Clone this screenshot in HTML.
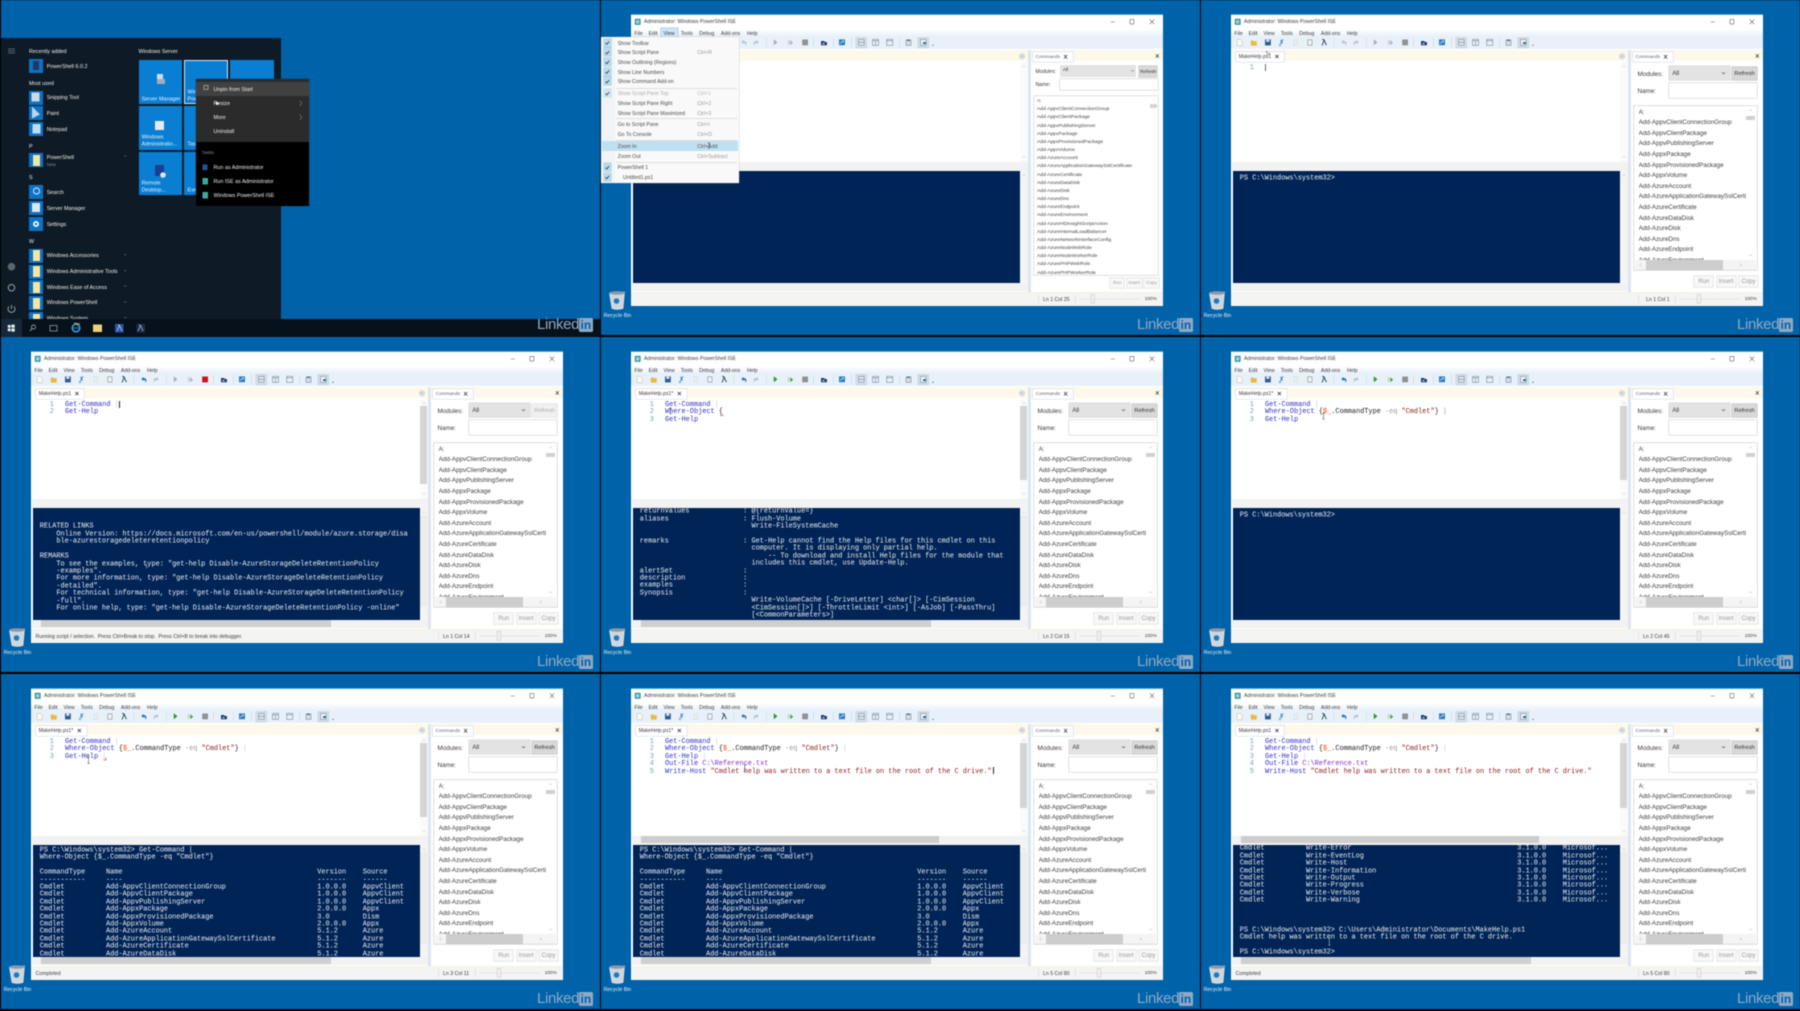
<!DOCTYPE html>
<html><head><meta charset="utf-8"><title>PowerShell ISE</title>
<style>
html,body{margin:0;padding:0;width:1800px;height:1011px;overflow:hidden;background:#000}
#r{position:absolute;left:0;top:0;width:1800px;height:1011px;filter:blur(.4px)}
.c{position:absolute;width:600px;height:337px;overflow:hidden;background:#000}
.c>*{position:absolute}
.o{left:0;top:0;width:600px;height:337px}
.d{left:1px;top:0;width:599px;height:335px;background:#0062a9}
.t{position:absolute;white-space:pre;font:5.2px/6px "Liberation Sans",sans-serif;color:#3c3c3c}
.rb{left:3.8px;top:313px;color:#e8f0f6;font-size:5.2px}
.li{left:537px;top:316px;font:15px/18px "Liberation Sans",sans-serif;letter-spacing:-.35px;color:#8fa9c6}
.in{left:578.6px;top:317.5px;width:14.5px;height:14px;background:#8fa9c6;border-radius:1.5px;color:#0062a9;font:bold 12px/15px "Liberation Sans",sans-serif;text-align:center}
.w{left:31.4px;top:15.3px;width:531.2px;height:290.4px;background:#fff;box-shadow:0 -.8px 0 #62b9de}
.mb{left:31.4px;top:29px;width:531.2px;height:7.7px;background:linear-gradient(#fff,#e6f0fa)}
.tb{left:31.4px;top:36.7px;width:531.2px;height:12.8px;background:#e8f1f9}
.ts{left:32px;top:49.5px;width:396px;height:11.8px;background:#fdf8ea}
.ts2{left:431px;top:49.5px;width:131.6px;height:11.8px;background:#fdf8ea}
.tab{left:35.6px;top:51.5px;width:48.5px;height:10.2px;background:#fff;box-shadow:0 0 0 .5px #c6d9e8}
.tab2{width:51px}
.ctab{left:433px;top:51.5px;width:40px;height:10.2px;background:#fff;box-shadow:0 0 0 .5px #c6d9e8}
.dv{left:428px;top:49.5px;width:3px;height:243px;background:#dbe6f0}
.hs{left:32px;top:162px;width:396px;height:8.5px;background:#f2f2f2}
.vs{left:420px;top:62px;width:8px;height:100px;background:#fafafa}
.vth{left:420px;top:69px;width:7px;background:#d4d4d4}
.hth{left:40.5px;top:162px;width:298px;height:6.8px;background:#cdcdcd}
.con{left:33px;top:171.3px;width:386.5px;height:111.4px;background:#012456;overflow:hidden}
.con pre{position:absolute;margin:0;font:6.9px/7.4px "Liberation Mono",monospace;color:#eef2f7;left:6.8px;white-space:pre;transform:translateY(1.6px)}
.vc{left:420px;top:171px;width:8px;height:112px;background:#f4f4f4}
.vct{left:420px;top:178px;width:7px;height:92px;background:#ececec}
.hc{left:32px;top:283px;width:396px;height:7.5px;background:#f2f2f2}
.hct{left:40.5px;top:283.3px;width:290px;height:6.7px;background:#cfcfcf}
.st{left:31.4px;top:291.5px;width:531.2px;height:14.2px;background:#f4f4f4;border-top:1px solid #f7f0dc;box-sizing:border-box}
.code{margin:0;left:65px;top:65px;font:6.9px/7.4px "Liberation Mono",monospace;color:#222;white-space:pre}
.num{margin:0;left:49.8px;top:65px;font:6.9px/7.4px "Liberation Mono",monospace;color:#66a5b5;white-space:pre}
.k{color:#2f2fc4}.s{color:#8b1a1a}.v{color:#ff4500}.g{color:#999}.m{color:#7a30d0}.p{color:#ccc}
.dd{left:469.2px;top:66px;width:60.5px;height:14.3px;background:#e3e3e3;box-shadow:0 0 0 .5px #d4d4d4}
.rf{left:532.3px;top:66.7px;width:24.5px;height:13.3px;background:#d8d8d8;box-shadow:0 0 0 .6px #c4c4c4;font:5.8px/15.3px "Liberation Sans",sans-serif;color:#333;text-align:center}
.rfd{background:#f0f0f0;color:#aaa;box-shadow:0 0 0 .6px #ddd}
.nm{left:469.2px;top:83.3px;width:87.6px;height:14.4px;background:#fff;box-shadow:0 0 0 .6px #cfcfcf}
.lb{left:434.4px;top:105.7px;width:122.4px;height:164.3px;background:#fff;box-shadow:0 0 0 .6px #c9c9c9}
.ll{margin:0;left:438.6px;top:106.9px;width:107.5px;height:153.1px;overflow:hidden;padding-top:.7px;box-sizing:border-box;font:6.3px/10.6px "Liberation Sans",sans-serif;color:#3f3f3f;white-space:pre}
.lh{left:434.8px;top:260px;width:121.6px;height:9.6px;background:#f4f4f4}
.lht{left:445.8px;top:260px;width:77.7px;height:9.6px;background:#cdcdcd}
.lvt{left:546.4px;top:115.7px;width:8.6px;height:4.6px;background:#d0d0d0}
.b{top:275.7px;height:11.6px;width:19px;background:#f8f8f8;box-shadow:0 0 0 .6px #dadada;font:6px/12.6px "Liberation Sans",sans-serif;color:#9a9a9a;text-align:center}
.x{font:bold 7.5px/6px "Liberation Sans",sans-serif;color:#444}
.sm{position:absolute;left:1px;top:38.3px;width:279.5px;height:281px;background:#0e1b26}
.tk{left:1px;top:319.3px;width:599px;height:18px;background:#07111b}
.sb{left:1px;top:319.3px;width:21px;height:18px;background:#15293a}
.tile{position:absolute;width:43.6px;height:43.7px;background:#0a7ed2}
.w1{color:#dfe6ec;font-size:5.4px}
.ic{position:absolute;left:29px;width:14px;height:14px;background:#0b72c4}
.fd{position:absolute;left:32.5px;width:7.5px;height:11px;background:#f4e6a0}
.cu{left:196.3px;top:79px;width:112.5px;height:127px;background:#000;box-shadow:0 0 1px #222}
.cu1{left:196.3px;top:79px;width:112.5px;height:63px;background:#2b2b2b}
.cu2{left:196.3px;top:82.3px;width:112.5px;height:14px;background:#414141}
.wt{color:#eee;font-size:5.4px;transform:translateY(.9px)}
.ti{color:#e6f2fb;font-size:5.4px;transform:translateY(.5px)}
.mn{left:1px;top:36.7px;width:137.6px;height:146px;background:#f9f9f9;box-shadow:0 0 1px #999}
.mi{color:#4a4a4a;font-size:5.2px;transform:translateY(.8px)}
.ms{color:#9a9a9a;font-size:5.2px;transform:translateY(.8px)}
.sp{position:absolute;left:16px;width:121px;height:.6px;background:#ddd}
.ckb{position:absolute;left:3.8px;width:6.9px;height:8px;background:#bcdcec;box-shadow:0 0 0 .4px #8fbcd4}
.lst{margin:0;left:437px;top:98px;width:112px;height:176.7px;overflow:hidden;font:4.9px/8.17px "Liberation Sans",sans-serif;color:#444;white-space:pre}
</style></head><body>
<svg width="0" height="0" style="position:absolute"><defs>
<g id="bin"><path d="M9.5 293.5l15-1.500 -1.500 16.500q-6 2-11 0z" fill="#cfd6dc" stroke="#eef2f5" stroke-width=".6"/><ellipse cx="17" cy="293" rx="7.800" ry="1.800" fill="#8d99a4"/><circle cx="16.500" cy="301" r="2.800" fill="#1c7ac4"/></g>
<g id="tb">
<path d="M37.200 39.200h3.200l1.800 1.800v4.800h-5z" fill="#fbfbf4" stroke="#b8b8a8" stroke-width=".5"/>
<path d="M50.800 40.500h2.400l.8.800h2.800v4.300h-6z" fill="#e9b847"/>
<rect x="65" y="39.400" width="5.800" height="6" fill="#2c5c94"/><rect x="66.200" y="39.600" width="3.200" height="2.200" fill="#dfe9f2"/>
<path d="M83 39.400l-2.500 4.200M80.600 39.800l1.800 3.800" stroke="#2f78c0" stroke-width=".9" fill="none"/><circle cx="80" cy="45" r=".9" fill="none" stroke="#2f78c0" stroke-width=".5"/>
<rect x="94" y="40" width="3.500" height="5" fill="#eceff2" stroke="#c8ccd0" stroke-width=".4"/>
<rect x="107.800" y="39.800" width="4.200" height="5.400" fill="#f4f4f4" stroke="#808a94" stroke-width=".6"/>
<path d="M122 45.500l2.200-5.500-2-.8M124.200 40.200l2.200 5" stroke="#27385c" stroke-width=".9" fill="none"/>
<path d="M134 38v9M166.500 38v9M213.500 38v9M233.500 38v9M251.400 38v9M299.700 38v9" stroke="#c6d3df" stroke-width=".5"/>
<path d="M141.500 42l1.800-2v1.200q3-.2 3 2.500q0 1-1 1.800q.6-2.800-2-2.600v1.200z" fill="#b4bdc6"/>
<path d="M158.500 42l-1.800-2v1.200q-3-.2-3 2.500q0 1 1 1.800q-.6-2.800 2-2.600v1.200z" fill="#b4bdc6"/>
<path d="M173.800 39.400l3.600 2.900-3.600 2.900z" fill="#a9adb2"/>
<rect x="187.800" y="40.200" width="3.500" height="4.600" fill="#d0d4d8"/><path d="M190.500 40.800l2.600 2-2.600 2z" fill="#a9adb2"/>
<rect x="202.200" y="39.500" width="5.800" height="5.800" fill="#8e9296"/>
<path d="M221 41h3l1 1h2v3.200h-6z" fill="#1c3c8c"/><rect x="222.500" y="43" width="2" height="1.300" fill="#f0d050"/>
<rect x="239" y="39.400" width="6" height="5.800" fill="#2a7cc8"/><path d="M240.200 43.600l3-3M243.400 40.400v2" stroke="#fff" stroke-width=".6" fill="none"/>
<rect x="256" y="37.600" width="10.500" height="10" fill="#dbe6f0" stroke="#9fb0c0" stroke-width=".4"/>
<rect x="258.500" y="39.400" width="5.800" height="6" fill="none" stroke="#68747e" stroke-width=".5"/><path d="M258.500 42.400h5.800" stroke="#68747e" stroke-width=".5"/>
<rect x="272.500" y="39.400" width="6" height="6" fill="none" stroke="#68747e" stroke-width=".5"/><path d="M272.500 40.800h6M275.500 40.800v4.600" stroke="#68747e" stroke-width=".5"/>
<rect x="286.700" y="39.400" width="6" height="6" fill="none" stroke="#68747e" stroke-width=".5"/><path d="M286.700 40.800h6" stroke="#68747e" stroke-width=".5"/>
<rect x="306" y="40" width="5" height="5.400" fill="#d6dce2" stroke="#6c7884" stroke-width=".5"/><path d="M307 39.500h3v1.500h-3z" fill="#48708c"/>
<rect x="318" y="37.600" width="10.500" height="10" fill="#d4dfe9" stroke="#a8b8c6" stroke-width=".4"/>
<rect x="320.500" y="39.400" width="5.500" height="6" fill="#f0f4f8" stroke="#68747e" stroke-width=".5"/><path d="M323 42.200h3v1.800h-3z" fill="#1c5c94"/>
<circle cx="333" cy="45.300" r=".6" fill="#445"/>
<path d="M510.800 22h4" stroke="#888" stroke-width=".7"/><rect x="530" y="19.400" width="3.800" height="4.600" fill="none" stroke="#666" stroke-width=".6"/>
<path d="M549.800 19.500l4.400 4.600M554.200 19.500l-4.400 4.600" stroke="#666" stroke-width=".6"/>
<rect x="34.800" y="18.800" width="5.800" height="6" fill="#2b8f9a"/><rect x="36" y="20" width="3.400" height="3.600" fill="#a2d2d2"/>
<circle cx="422" cy="56.300" r="2.600" fill="#e4e8ec" stroke="#9aa6b2" stroke-width=".4"/><path d="M420.800 56.800l1.200-1.200 1.200 1.200" stroke="#667" stroke-width=".5" fill="none"/>
<path d="M555.800 54.200l3 3.400M558.800 54.200l-3 3.400M464 54.800l3.200 3.800M467.200 54.800l-3.200 3.800" stroke="#333" stroke-width=".7"/>
<path d="M479.500 299h60" stroke="#e0e0e0" stroke-width=".7"/><path d="M438.600 295v8M475.300 295v8" stroke="#c8c8c8" stroke-width=".4"/>
<path d="M422.500 67l1.500-1.500 1.500 1.500M422.500 156l1.500 1.500 1.500-1.500M422.500 176l1.500-1.500 1.500 1.500" stroke="#bbb" stroke-width=".5" fill="none"/>
</g>
<g id="pn"><path d="M521.800 72.300l1.700 1.500 1.700-1.500" stroke="#444" stroke-width=".6" fill="none"/>
<path d="M549 111l1.500-1.500 1.500 1.500M549 254.500l1.500 1.500 1.500-1.500M441.300 263.500l-1.500 1.500 1.500 1.500M540 263.500l1.500 1.500-1.500 1.500" stroke="#aaa" stroke-width=".5" fill="none"/>
<rect x="497.300" y="294.300" width="3.400" height="9" fill="#f0f0f0" stroke="#bbb" stroke-width=".4"/></g>
<path id="undo" d="M141.500 42l1.800-2v1.200q3-.2 3 2.500q0 1-1 1.800q.6-2.800-2-2.600v1.200z" fill="#1d6bb8"/>
<g id="run"><path d="M173.800 39.400l3.600 2.900-3.600 2.900z" fill="#22a030"/><rect x="187.800" y="40.200" width="3.500" height="4.600" fill="#cfd8cf"/><path d="M190.500 40.800l2.600 2-2.600 2z" fill="#22a030"/></g>
</defs></svg>
<div id="r">

<!-- CELL 1 -->
<div class="c" style="left:0;top:0">
<div class="d"></div>
<div class="sm"></div>
<div class="tk"></div><div class="sb"></div>
<div class="t wt" style="left:29px;top:48px">Recently added</div>
<div class="ic" style="top:59px"></div><div class="t wt" style="left:46.700px;top:62.700px">PowerShell 6.0.2</div>
<div class="t wt" style="left:29px;top:79.700px">Most used</div>
<div class="ic" style="top:90.500px"></div><div class="t wt" style="left:46.700px;top:94.300px">Snipping Tool</div>
<div class="ic" style="top:106px"></div><div class="t wt" style="left:46.700px;top:110px">Paint</div>
<div class="ic" style="top:122px"></div><div class="t wt" style="left:46.700px;top:126px">Notepad</div>
<div class="t wt" style="left:29px;top:142.700px">P</div>
<div class="ic" style="top:153px"></div><div class="fd" style="top:154.500px"></div><div class="t wt" style="left:46.700px;top:153.700px">PowerShell</div><div class="t" style="left:46.700px;top:162px;color:#7e8c98;font-size:4.600px">New</div>
<div class="t wt" style="left:29px;top:174.300px">S</div>
<div class="ic" style="top:185px"></div><div class="t wt" style="left:46.700px;top:189px">Search</div>
<div class="ic" style="top:201px"></div><div class="t wt" style="left:46.700px;top:205px">Server Manager</div>
<div class="ic" style="top:217px"></div><div class="t wt" style="left:46.700px;top:220.700px">Settings</div>
<div class="t wt" style="left:29px;top:237.700px">W</div>
<div class="ic" style="top:248.500px"></div><div class="fd" style="top:250px"></div><div class="t wt" style="left:46.700px;top:252.300px">Windows Accessories</div>
<div class="ic" style="top:264.500px"></div><div class="fd" style="top:266px"></div><div class="t wt" style="left:46.700px;top:268px">Windows Administrative Tools</div>
<div class="ic" style="top:280px"></div><div class="fd" style="top:281.500px"></div><div class="t wt" style="left:46.700px;top:283.700px">Windows Ease of Access</div>
<div class="ic" style="top:296px"></div><div class="fd" style="top:297.500px"></div><div class="t wt" style="left:46.700px;top:299.300px">Windows PowerShell</div>
<div class="ic" style="top:312px;height:7.300px"></div><div class="fd" style="top:313.500px;height:5.800px"></div><div style="left:46.700px;top:314px;width:60px;height:5.300px;overflow:hidden"><div class="t wt" style="left:0;top:1px">Windows System</div></div>
<div class="t wt" style="left:138.500px;top:48px">Windows Server</div>
<div class="tile" style="left:138.500px;top:60.300px"></div>
<div class="tile" style="left:184px;top:60.300px;box-sizing:border-box;border:.8px solid #cfe8fa"></div>
<div class="tile" style="left:230px;top:60.300px"></div>
<div class="tile" style="left:138.500px;top:106px"></div>
<div class="tile" style="left:184px;top:106px"></div>
<div class="tile" style="left:230px;top:106px"></div>
<div class="tile" style="left:138.500px;top:151.700px"></div>
<div class="tile" style="left:184px;top:151.700px"></div>
<div class="tile" style="left:230px;top:151.700px"></div>
<div class="t ti" style="left:141.600px;top:95.700px">Server Manager</div>
<div class="t ti" style="left:141.600px;top:134.300px">Windows</div><div class="t ti" style="left:141.600px;top:141px">Administratio...</div>
<div class="t ti" style="left:141.600px;top:179.700px">Remote</div><div class="t ti" style="left:141.600px;top:187px">Desktop...</div>
<div class="t ti" style="left:187.500px;top:88.700px">Win</div><div class="t ti" style="left:187.500px;top:95.700px">Pow</div>
<div class="t ti" style="left:187.500px;top:141px">Task</div><div class="t ti" style="left:187.500px;top:187px">Eve</div>
<div class="cu"></div><div class="cu1"></div><div class="cu2"></div>
<div class="t wt" style="left:213.500px;top:86.300px">Unpin from Start</div>
<div class="t wt" style="left:213.500px;top:100.300px">Resize</div>
<div class="t wt" style="left:213.500px;top:114.300px">More</div>
<div class="t wt" style="left:213.500px;top:128.300px">Uninstall</div>
<div class="t" style="left:201.700px;top:151.200px;color:#8a8a8a;font-size:4.800px">Tasks</div>
<div class="t wt" style="left:213.500px;top:164.300px">Run as Administrator</div>
<div class="t wt" style="left:213.500px;top:178.300px">Run ISE as Administrator</div>
<div class="t wt" style="left:213.500px;top:192.300px">Windows PowerShell ISE</div>
<svg class="o" viewBox="0 0 600 337">
<path d="M8 49h7M8 51h7M8 53h7" stroke="#6c7680" stroke-width=".7"/>
<rect x="33" y="61" width="6" height="9" fill="#1f3768"/>
<rect x="31.500" y="92.500" width="8" height="9" fill="#cfd8e0"/><path d="M32 106.500l8 8-8 4z" fill="#b9d7e8"/><rect x="32.500" y="124" width="8" height="9.500" fill="#bcdcef"/>
<circle cx="36.500" cy="191" r="3" fill="none" stroke="#dcecf8" stroke-width=".9"/>
<rect x="32" y="203" width="8" height="9" fill="#dce8f0"/>
<circle cx="36" cy="224" r="3" fill="#eef4fa"/><circle cx="36" cy="224" r="1.200" fill="#0b72c4"/>
<path d="M124 155.500l1.200 1.200 1.200-1.200M124 254l1.200 1.200 1.200-1.200M124 270l1.200 1.200 1.200-1.200M124 285.500l1.200 1.200 1.200-1.200M124 301.500l1.200 1.200 1.200-1.200M124 317l1.200 1.200 1.200-1.200" stroke="#8c96a0" stroke-width=".5" fill="none"/>
<circle cx="11.500" cy="266.700" r="3.800" fill="#5c666e"/><circle cx="11.500" cy="287.700" r="3.200" fill="none" stroke="#9aa4ae" stroke-width="1"/>
<path d="M9 306.500a3.500 3.500 0 1 0 5 0M11.500 305v4" stroke="#c6ced6" stroke-width=".7" fill="none"/>
<rect x="157" y="74" width="6" height="9" fill="#d2dee8"/><rect x="157" y="79" width="8" height="5" fill="#9fb0be"/>
<rect x="155" y="121" width="9" height="9" fill="#e4eaf0"/><rect x="155" y="165" width="9" height="11" fill="#1b3f8f"/><circle cx="163" cy="175" r="2.800" fill="#dfe8f0"/>
<rect x="204" y="85.500" width="4" height="4" fill="none" stroke="#ccc" stroke-width=".6"/>
<rect x="202.500" y="164.500" width="5" height="5.600" fill="#2b4f9c"/><rect x="202.500" y="178" width="5.500" height="6.500" fill="#3ca8a0"/><rect x="202.500" y="192" width="5.500" height="6.500" fill="#3ca8a0"/>
<path d="M299.800 100.700l2 2.600-2 2.600M299.800 114.700l2 2.600-2 2.600" stroke="#aaa" stroke-width=".5" fill="none"/>
<path d="M215.500 101l1.500 4.500 1-1.500 1.500-.2z" fill="#fff"/>
<path d="M7.800 325h2.800v2.700H7.800zM11.400 324.600h3.300v3.100h-3.300zM7.800 328.500h2.800v2.700H7.800zM11.400 328.500h3.300v3.100h-3.300z" fill="#eaf2f8"/>
<circle cx="33.500" cy="327" r="2" fill="none" stroke="#bcc6ce" stroke-width=".7"/><path d="M32 328.500l-2 2.500" stroke="#bcc6ce" stroke-width=".7"/>
<rect x="50" y="325.500" width="7" height="5.500" fill="none" stroke="#bcc6ce" stroke-width=".6"/>
<circle cx="76" cy="328" r="3.800" fill="none" stroke="#3ba4e4" stroke-width="1.500"/><path d="M72.500 328h7" stroke="#3ba4e4" stroke-width=".8"/><path d="M74 323l6 1" stroke="#f0c840" stroke-width=".8"/>
<rect x="93" y="324.500" width="9" height="7.500" fill="#edd27a"/>
<rect x="115" y="324" width="8.500" height="8.500" fill="#2c54a8"/><path d="M117 331l2.500-5.500-1.500-1M119.500 325.500l2.500 5.500" stroke="#eef" stroke-width=".6" fill="none"/>
<rect x="136.500" y="324" width="8.500" height="8.500" fill="#1c2c4c"/><path d="M138 331l2.500-5.500-1.500-1M140.500 325.500l2.500 5.500" stroke="#dde" stroke-width=".6" fill="none"/>
</svg>
<div class="li">Linked</div><div class="in">in</div>
</div>

<!-- CELL 2 -->
<div class="c" style="left:600px;top:0">
<div class="d"></div>
<svg class="o" viewBox="0 0 600 337"><use href="#bin"/></svg>
<div class="t rb">Recycle Bin</div><div class="li">Linked</div><div class="in">in</div>
<div class="w"></div><div class="mb"></div><div class="tb"></div><div class="ts"></div><div class="ts2"></div><div class="dv"></div><div class="hs"></div><div class="vs"></div><div class="con"></div><div class="vc"></div><div class="hc"></div><div class="st"></div><div class="ctab"></div>
<div style="left:60.500px;top:28.300px;width:17.200px;height:8.400px;background:#cfe5f5;box-shadow:0 0 0 .5px #8cc0dc"></div>
<div class="t" style="left:44px;top:18.700px">Administrator: Windows PowerShell ISE</div>
<div class="t" style="left:34.400px;top:30.500px">File</div><div class="t" style="left:48.600px;top:30.500px">Edit</div><div class="t" style="left:63.500px;top:30.500px">View</div><div class="t" style="left:80.700px;top:30.500px">Tools</div><div class="t" style="left:99.100px;top:30.500px">Debug</div><div class="t" style="left:120.900px;top:30.500px">Add-ons</div><div class="t" style="left:147px;top:30.500px">Help</div>
<div class="t" style="left:435.500px;top:54.500px;font-size:4.800px;color:#5d6b70">Commands</div>
<div class="t" style="left:435.500px;top:68.600px;font-size:5.100px">Modules:</div><div class="t" style="left:435.500px;top:82.300px;font-size:5.100px">Name:</div>
<div style="left:460px;top:65.300px;width:75.800px;height:11.400px;background:#e3e3e3"></div><div class="t" style="left:462.700px;top:68px;font-size:4.900px">All</div>
<div style="left:539px;top:65.700px;width:18.300px;height:11px;background:#d8d8d8;box-shadow:0 0 0 .6px #c4c4c4;font:4.600px/12px 'Liberation Sans',sans-serif;color:#333;text-align:center">Refresh</div>
<div style="left:460px;top:79.300px;width:97.700px;height:10.700px;background:#fff;box-shadow:0 0 0 .6px #cfcfcf"></div>
<div style="left:433.600px;top:95.700px;width:124.100px;height:179.300px;background:#fff;box-shadow:0 0 0 .6px #cfcfcf"></div>
<pre class="lst">A:
Add-AppvClientConnectionGroup
Add-AppvClientPackage
Add-AppvPublishingServer
Add-AppxPackage
Add-AppxProvisionedPackage
Add-AppxVolume
Add-AzureAccount
Add-AzureApplicationGatewaySslCertificate
Add-AzureCertificate
Add-AzureDataDisk
Add-AzureDisk
Add-AzureDns
Add-AzureEndpoint
Add-AzureEnvironment
Add-AzureHDInsightScriptAction
Add-AzureInternalLoadBalancer
Add-AzureNetworkInterfaceConfig
Add-AzureNodeWebRole
Add-AzureNodeWorkerRole
Add-AzurePHPWebRole
Add-AzurePHPWorkerRole</pre>
<div style="left:549.500px;top:103.500px;width:7px;height:4px;background:#d4d4d4"></div>
<div class="b" style="left:510px;top:278.300px;width:14.400px;height:9.700px;font-size:4.600px;line-height:10.500px">Run</div><div class="b" style="left:527px;top:278.300px;width:14.500px;height:9.700px;font-size:4.600px;line-height:10.500px">Insert</div><div class="b" style="left:544.200px;top:278.300px;width:14.500px;height:9.700px;font-size:4.600px;line-height:10.500px">Copy</div>
<div class="t" style="left:443px;top:296.700px">Ln 1 Col 25</div><div class="t" style="left:544.600px;top:297px;font-size:4.800px">100%</div>
<svg class="o" viewBox="0 0 600 337"><use href="#tb"/><path d="M531 70l1.500 1.500 1.500-1.500" stroke="#555" stroke-width=".5" fill="none"/><rect x="491" y="294.300" width="3.400" height="9" fill="#f0f0f0" stroke="#bbb" stroke-width=".4"/></svg>
<div class="mn"></div>
<div style="left:1px;top:36.700px;width:14px;height:146px;background:#f0f4f7"></div>
<div class="ckb" style="top:38.700px"></div><div class="ckb" style="top:48.300px"></div><div class="ckb" style="top:58px"></div><div class="ckb" style="top:67.700px"></div><div class="ckb" style="top:77.300px"></div><div class="ckb" style="top:89.300px;opacity:.6"></div><div class="ckb" style="top:163.300px"></div><div class="ckb" style="top:173px"></div>
<div style="left:2px;top:140.700px;width:136px;height:10px;background:#bfe0f0"></div>
<div class="sp" style="top:87.500px"></div><div class="sp" style="top:118.300px"></div><div class="sp" style="top:139.500px"></div><div class="sp" style="top:161.500px"></div>
<div class="t mi" style="left:17.600px;top:39.700px">Show Toolbar</div>
<div class="t mi" style="left:17.600px;top:49.300px">Show Script Pane</div><div class="t ms" style="left:97.200px;top:49.300px">Ctrl+R</div>
<div class="t mi" style="left:17.600px;top:59px">Show Outlining (Regions)</div>
<div class="t mi" style="left:17.600px;top:68.700px">Show Line Numbers</div>
<div class="t mi" style="left:17.600px;top:78.300px">Show Command Add-on</div>
<div class="t mi" style="left:17.600px;top:90.300px;color:#aaa">Show Script Pane Top</div><div class="t ms" style="left:97.200px;top:90.300px;color:#bbb">Ctrl+1</div>
<div class="t mi" style="left:17.600px;top:100px">Show Script Pane Right</div><div class="t ms" style="left:97.200px;top:100px">Ctrl+2</div>
<div class="t mi" style="left:17.600px;top:109.700px">Show Script Pane Maximized</div><div class="t ms" style="left:97.200px;top:109.700px">Ctrl+3</div>
<div class="t mi" style="left:17.600px;top:121.300px">Go to Script Pane</div><div class="t ms" style="left:97.200px;top:121.300px">Ctrl+I</div>
<div class="t mi" style="left:17.600px;top:131.300px">Go To Console</div><div class="t ms" style="left:97.200px;top:131.300px">Ctrl+D</div>
<div class="t mi" style="left:17.600px;top:142.700px">Zoom In</div><div class="t ms" style="left:97.200px;top:142.700px;color:#555">Ctrl+Add</div>
<div class="t mi" style="left:17.600px;top:152.700px">Zoom Out</div><div class="t ms" style="left:97.200px;top:152.700px">Ctrl+Subtract</div>
<div class="t mi" style="left:17.600px;top:164.300px">PowerShell 1</div>
<div class="t mi" style="left:23px;top:174px">Untitled1.ps1</div>
<svg class="o" viewBox="0 0 600 337"><path d="M5.500 43l1.300 1.400 2.300-3M5.500 52.600l1.300 1.400 2.300-3M5.500 62.300l1.300 1.400 2.300-3M5.500 72l1.300 1.400 2.300-3M5.500 81.600l1.300 1.400 2.300-3M5.500 93.600l1.300 1.400 2.300-3M5.500 167.600l1.300 1.400 2.300-3M5.500 177.300l1.300 1.400 2.300-3" stroke="#1c3c58" stroke-width=".8" fill="none"/><path d="M109 143v5M107.800 143h2.400M107.800 148h2.400" stroke="#333" stroke-width=".5"/></svg>
</div>

<!-- CELL 3 -->
<div class="c" style="left:1200px;top:0">
<div class="d"></div>
<svg class="o" viewBox="0 0 600 337"><use href="#bin"/></svg>
<div class="t rb">Recycle Bin</div><div class="li">Linked</div><div class="in">in</div>
<div class="w"></div><div class="mb"></div><div class="tb"></div><div class="ts"></div><div class="ts2"></div><div class="dv"></div><div class="hs"></div><div class="vs"></div><div class="con"><pre style="top:3.200px">PS C:\Windows\system32&gt;</pre></div><div class="vc"></div><div class="hc"></div><div class="st"></div><div class="ctab"></div><div class="tab"></div>
<div class="t" style="left:44px;top:18.700px">Administrator: Windows PowerShell ISE</div>
<div class="t" style="left:34.400px;top:30.500px">File</div><div class="t" style="left:48.600px;top:30.500px">Edit</div><div class="t" style="left:63.500px;top:30.500px">View</div><div class="t" style="left:80.700px;top:30.500px">Tools</div><div class="t" style="left:99.100px;top:30.500px">Debug</div><div class="t" style="left:120.900px;top:30.500px">Add-ons</div><div class="t" style="left:147px;top:30.500px">Help</div>
<div class="t" style="left:38.700px;top:54px;font-size:5.100px">MakeHelp.ps1</div><div class="t x" style="left:74.800px;top:54px">×</div>
<pre class="num">1</pre><div style="left:65.400px;top:64px;width:.8px;height:6.500px;background:#666"></div>
<div class="t" style="left:435.500px;top:54.500px;font-size:4.800px;color:#5d6b70">Commands</div>
<div class="t" style="left:437.500px;top:71.700px;font-size:6.300px">Modules:</div><div class="t" style="left:437.500px;top:89.300px;font-size:6.300px">Name:</div>
<div class="dd"></div><div class="t" style="left:472.200px;top:70.700px;font-size:6.300px">All</div><div class="rf">Refresh</div><div class="nm"></div><div class="lb"></div>
<pre class="ll">A:
Add-AppvClientConnectionGroup
Add-AppvClientPackage
Add-AppvPublishingServer
Add-AppxPackage
Add-AppxProvisionedPackage
Add-AppxVolume
Add-AzureAccount
Add-AzureApplicationGatewaySslCertificate
Add-AzureCertificate
Add-AzureDataDisk
Add-AzureDisk
Add-AzureDns
Add-AzureEndpoint
Add-AzureEnvironment</pre>
<div class="lh"></div><div class="lht"></div><div class="lvt"></div>
<div class="b" style="left:494.400px">Run</div><div class="b" style="left:516.700px">Insert</div><div class="b" style="left:539px">Copy</div>
<div class="t" style="left:446px;top:296.700px">Ln 1 Col 1</div><div class="t" style="left:544.600px;top:297px;font-size:4.800px">100%</div>
<svg class="o" viewBox="0 0 600 337"><use href="#tb"/><use href="#pn"/><path d="M66 51l1.500 4.500 1-1.500 1.500-.2z" fill="#fff" stroke="#444" stroke-width=".4"/></svg>
</div>

<!-- CELL 4 -->
<div class="c" style="left:0;top:337px">
<div class="d"></div>
<svg class="o" viewBox="0 0 600 337"><use href="#bin"/></svg>
<div class="t rb">Recycle Bin</div><div class="li">Linked</div><div class="in">in</div>
<div class="w"></div><div class="mb"></div><div class="tb"></div><div class="ts"></div><div class="ts2"></div><div class="dv"></div><div class="hs"></div><div class="vs"></div><div class="vth" style="height:78px"></div>
<div class="con"><pre style="top:14.200px">RELATED LINKS
    Online Version: https://docs.microsoft.com/en-us/powershell/module/azure.storage/disa
    ble-azurestoragedeleteretentionpolicy

REMARKS
    To see the examples, type: "get-help Disable-AzureStorageDeleteRetentionPolicy
    -examples".
    For more information, type: "get-help Disable-AzureStorageDeleteRetentionPolicy
    -detailed".
    For technical information, type: "get-help Disable-AzureStorageDeleteRetentionPolicy
    -full".
    For online help, type: "get-help Disable-AzureStorageDeleteRetentionPolicy -online"</pre></div>
<div class="vc"></div><div class="vct"></div><div class="hc"></div><div class="hct"></div><div class="st"></div><div class="ctab"></div><div class="tab"></div>
<div class="t" style="left:44px;top:18.700px">Administrator: Windows PowerShell ISE</div>
<div class="t" style="left:34.400px;top:30.500px">File</div><div class="t" style="left:48.600px;top:30.500px">Edit</div><div class="t" style="left:63.500px;top:30.500px">View</div><div class="t" style="left:80.700px;top:30.500px">Tools</div><div class="t" style="left:99.100px;top:30.500px">Debug</div><div class="t" style="left:120.900px;top:30.500px">Add-ons</div><div class="t" style="left:147px;top:30.500px">Help</div>
<div class="t" style="left:38.700px;top:54px;font-size:5.100px">MakeHelp.ps1</div><div class="t x" style="left:74.800px;top:54px">×</div>
<pre class="num">1
2</pre>
<pre class="code"><span class="k">Get-Command</span> <span class="p">|</span>
<span class="k">Get-Help</span></pre>
<div style="left:119.300px;top:64px;width:.8px;height:6.500px;background:#222"></div>
<div class="t" style="left:435.500px;top:54.500px;font-size:4.800px;color:#5d6b70">Commands</div>
<div class="t" style="left:437.500px;top:71.700px;font-size:6.300px">Modules:</div><div class="t" style="left:437.500px;top:89.300px;font-size:6.300px">Name:</div>
<div class="dd"></div><div class="t" style="left:472.200px;top:70.700px;font-size:6.300px">All</div><div class="rf rfd">Refresh</div><div class="nm"></div><div class="lb"></div>
<pre class="ll">A:
Add-AppvClientConnectionGroup
Add-AppvClientPackage
Add-AppvPublishingServer
Add-AppxPackage
Add-AppxProvisionedPackage
Add-AppxVolume
Add-AzureAccount
Add-AzureApplicationGatewaySslCertificate
Add-AzureCertificate
Add-AzureDataDisk
Add-AzureDisk
Add-AzureDns
Add-AzureEndpoint
Add-AzureEnvironment</pre>
<div class="lh"></div><div class="lht"></div><div class="lvt"></div>
<div class="b" style="left:494.400px">Run</div><div class="b" style="left:516.700px">Insert</div><div class="b" style="left:539px">Copy</div>
<div class="t" style="left:35.600px;top:297.300px;font-size:5.200px">Running script / selection.  Press Ctrl+Break to stop.  Press Ctrl+B to break into debugger.</div>
<div class="t" style="left:443px;top:296.700px">Ln 1 Col 14</div><div class="t" style="left:544.600px;top:297px;font-size:4.800px">100%</div>
<svg class="o" viewBox="0 0 600 337"><use href="#tb"/><use href="#pn"/><use href="#undo"/><rect x="202.200" y="39.500" width="5.800" height="5.800" fill="#c8141e"/><path d="M146.500 226.500v5" stroke="#dde" stroke-width=".5"/></svg>
</div>

<!-- CELL 5 -->
<div class="c" style="left:600px;top:337px">
<div class="d"></div>
<svg class="o" viewBox="0 0 600 337"><use href="#bin"/></svg>
<div class="t rb">Recycle Bin</div><div class="li">Linked</div><div class="in">in</div>
<div class="w"></div><div class="mb"></div><div class="tb"></div><div class="ts"></div><div class="ts2"></div><div class="dv"></div><div class="hs"></div><div class="vs"></div><div class="vth" style="height:74px"></div>
<div class="con"><pre style="top:-.900px">returnValues             : @{returnValue=}
aliases                  : Flush-Volume
                           Write-FileSystemCache

remarks                  : Get-Help cannot find the Help files for this cmdlet on this
                           computer. It is displaying only partial help.
                               -- To download and install Help files for the module that
                           includes this cmdlet, use Update-Help.
alertSet                 :
description              :
examples                 :
Synopsis                 :
                           Write-VolumeCache [-DriveLetter] &lt;char[]&gt; [-CimSession
                           &lt;CimSession[]&gt;] [-ThrottleLimit &lt;int&gt;] [-AsJob] [-PassThru]
                           [&lt;CommonParameters&gt;]</pre></div>
<div class="vc"></div><div class="vct"></div><div class="hc"></div><div class="hct"></div><div class="st"></div><div class="ctab"></div><div class="tab tab2"></div>
<div class="t" style="left:44px;top:18.700px">Administrator: Windows PowerShell ISE</div>
<div class="t" style="left:34.400px;top:30.500px">File</div><div class="t" style="left:48.600px;top:30.500px">Edit</div><div class="t" style="left:63.500px;top:30.500px">View</div><div class="t" style="left:80.700px;top:30.500px">Tools</div><div class="t" style="left:99.100px;top:30.500px">Debug</div><div class="t" style="left:120.900px;top:30.500px">Add-ons</div><div class="t" style="left:147px;top:30.500px">Help</div>
<div class="t" style="left:38.700px;top:54px;font-size:5.100px">MakeHelp.ps1*</div><div class="t x" style="left:77.100px;top:54px">×</div>
<pre class="num">1
2
3</pre>
<pre class="code"><span class="k">Get-Command</span> <span class="p">|</span>
<span class="k">Where-Object</span> {
<span class="k">Get-Help</span></pre>
<div class="t" style="left:435.500px;top:54.500px;font-size:4.800px;color:#5d6b70">Commands</div>
<div class="t" style="left:437.500px;top:71.700px;font-size:6.300px">Modules:</div><div class="t" style="left:437.500px;top:89.300px;font-size:6.300px">Name:</div>
<div class="dd"></div><div class="t" style="left:472.200px;top:70.700px;font-size:6.300px">All</div><div class="rf">Refresh</div><div class="nm"></div><div class="lb"></div>
<pre class="ll">A:
Add-AppvClientConnectionGroup
Add-AppvClientPackage
Add-AppvPublishingServer
Add-AppxPackage
Add-AppxProvisionedPackage
Add-AppxVolume
Add-AzureAccount
Add-AzureApplicationGatewaySslCertificate
Add-AzureCertificate
Add-AzureDataDisk
Add-AzureDisk
Add-AzureDns
Add-AzureEndpoint
Add-AzureEnvironment</pre>
<div class="lh"></div><div class="lht"></div><div class="lvt"></div>
<div class="b" style="left:494.400px">Run</div><div class="b" style="left:516.700px">Insert</div><div class="b" style="left:539px">Copy</div>
<div class="t" style="left:443px;top:296.700px">Ln 2 Col 15</div><div class="t" style="left:544.600px;top:297px;font-size:4.800px">100%</div>
<svg class="o" viewBox="0 0 600 337"><use href="#tb"/><use href="#pn"/><use href="#undo"/><use href="#run"/><path d="M120 78.500h3.500" stroke="#d02020" stroke-width=".6"/><path d="M70.500 71v6M69.500 71h2M69.500 77h2" stroke="#333" stroke-width=".5"/></svg>
</div>

<!-- CELL 6 -->
<div class="c" style="left:1200px;top:337px">
<div class="d"></div>
<svg class="o" viewBox="0 0 600 337"><use href="#bin"/></svg>
<div class="t rb">Recycle Bin</div><div class="li">Linked</div><div class="in">in</div>
<div class="w"></div><div class="mb"></div><div class="tb"></div><div class="ts"></div><div class="ts2"></div><div class="dv"></div><div class="hs"></div><div class="vs"></div><div class="vth" style="height:74px"></div>
<div class="con"><pre style="top:3.200px">PS C:\Windows\system32&gt;</pre></div>
<div class="vc"></div><div class="hc"></div><div class="st"></div><div class="ctab"></div><div class="tab tab2"></div>
<div class="t" style="left:44px;top:18.700px">Administrator: Windows PowerShell ISE</div>
<div class="t" style="left:34.400px;top:30.500px">File</div><div class="t" style="left:48.600px;top:30.500px">Edit</div><div class="t" style="left:63.500px;top:30.500px">View</div><div class="t" style="left:80.700px;top:30.500px">Tools</div><div class="t" style="left:99.100px;top:30.500px">Debug</div><div class="t" style="left:120.900px;top:30.500px">Add-ons</div><div class="t" style="left:147px;top:30.500px">Help</div>
<div class="t" style="left:38.700px;top:54px;font-size:5.100px">MakeHelp.ps1*</div><div class="t x" style="left:77.100px;top:54px">×</div>
<pre class="num">1
2
3</pre>
<pre class="code"><span class="k">Get-Command</span> <span class="p">|</span>
<span class="k">Where-Object</span> {<span class="v">$_</span>.CommandType <span class="g">-eq</span> <span class="s">"Cmdlet"</span>} <span class="g">|</span>
<span class="k">Get-Help</span></pre>
<div class="t" style="left:435.500px;top:54.500px;font-size:4.800px;color:#5d6b70">Commands</div>
<div class="t" style="left:437.500px;top:71.700px;font-size:6.300px">Modules:</div><div class="t" style="left:437.500px;top:89.300px;font-size:6.300px">Name:</div>
<div class="dd"></div><div class="t" style="left:472.200px;top:70.700px;font-size:6.300px">All</div><div class="rf">Refresh</div><div class="nm"></div><div class="lb"></div>
<pre class="ll">A:
Add-AppvClientConnectionGroup
Add-AppvClientPackage
Add-AppvPublishingServer
Add-AppxPackage
Add-AppxProvisionedPackage
Add-AppxVolume
Add-AzureAccount
Add-AzureApplicationGatewaySslCertificate
Add-AzureCertificate
Add-AzureDataDisk
Add-AzureDisk
Add-AzureDns
Add-AzureEndpoint
Add-AzureEnvironment</pre>
<div class="lh"></div><div class="lht"></div><div class="lvt"></div>
<div class="b" style="left:494.400px">Run</div><div class="b" style="left:516.700px">Insert</div><div class="b" style="left:539px">Copy</div>
<div class="t" style="left:443px;top:296.700px">Ln 2 Col 45</div><div class="t" style="left:544.600px;top:297px;font-size:4.800px">100%</div>
<svg class="o" viewBox="0 0 600 337"><use href="#tb"/><use href="#pn"/><use href="#undo"/><use href="#run"/><path d="M123.500 76v6M122.500 76h2M122.500 82h2" stroke="#333" stroke-width=".5"/></svg>
</div>

<!-- CELL 7 -->
<div class="c" style="left:0;top:674px">
<div class="d"></div>
<svg class="o" viewBox="0 0 600 337"><use href="#bin"/></svg>
<div class="t rb">Recycle Bin</div><div class="li">Linked</div><div class="in">in</div>
<div class="w"></div><div class="mb"></div><div class="tb"></div><div class="ts"></div><div class="ts2"></div><div class="dv"></div><div class="hs"></div><div class="vs"></div><div class="vth" style="height:74px"></div>
<div class="con"><pre style="top:.700px">PS C:\Windows\system32&gt; Get-Command |
Where-Object {$_.CommandType -eq "Cmdlet"}

CommandType
-----------
Cmdlet
Cmdlet
Cmdlet
Cmdlet
Cmdlet
Cmdlet
Cmdlet
Cmdlet
Cmdlet
Cmdlet</pre><pre style="top:15.500px;left:73px">

Name
----
Add-AppvClientConnectionGroup
Add-AppvClientPackage
Add-AppvPublishingServer
Add-AppxPackage
Add-AppxProvisionedPackage
Add-AppxVolume
Add-AzureAccount
Add-AzureApplicationGatewaySslCertificate
Add-AzureCertificate
Add-AzureDataDisk</pre><pre style="top:15.500px;left:284.200px">

Version
-------
1.0.0.0
1.0.0.0
1.0.0.0
2.0.0.0
3.0
2.0.0.0
5.1.2
5.1.2
5.1.2
5.1.2</pre><pre style="top:15.500px;left:329.700px">

Source
------
AppvClient
AppvClient
AppvClient
Appx
Dism
Appx
Azure
Azure
Azure
Azure</pre></div>
<div class="vc"></div><div class="vct"></div><div class="hc"></div><div class="hct"></div><div class="st"></div><div class="ctab"></div><div class="tab tab2"></div>
<div class="t" style="left:44px;top:18.700px">Administrator: Windows PowerShell ISE</div>
<div class="t" style="left:34.400px;top:30.500px">File</div><div class="t" style="left:48.600px;top:30.500px">Edit</div><div class="t" style="left:63.500px;top:30.500px">View</div><div class="t" style="left:80.700px;top:30.500px">Tools</div><div class="t" style="left:99.100px;top:30.500px">Debug</div><div class="t" style="left:120.900px;top:30.500px">Add-ons</div><div class="t" style="left:147px;top:30.500px">Help</div>
<div class="t" style="left:38.700px;top:54px;font-size:5.100px">MakeHelp.ps1*</div><div class="t x" style="left:77.100px;top:54px">×</div>
<pre class="num">1
2
3</pre>
<pre class="code"><span class="k">Get-Command</span> <span class="p">|</span>
<span class="k">Where-Object</span> {<span class="v">$_</span>.CommandType <span class="g">-eq</span> <span class="s">"Cmdlet"</span>} <span class="p">|</span>
<span class="k">Get-Help</span> <span class="p">|</span></pre>
<div class="t" style="left:435.500px;top:54.500px;font-size:4.800px;color:#5d6b70">Commands</div>
<div class="t" style="left:437.500px;top:71.700px;font-size:6.300px">Modules:</div><div class="t" style="left:437.500px;top:89.300px;font-size:6.300px">Name:</div>
<div class="dd"></div><div class="t" style="left:472.200px;top:70.700px;font-size:6.300px">All</div><div class="rf">Refresh</div><div class="nm"></div><div class="lb"></div>
<pre class="ll">A:
Add-AppvClientConnectionGroup
Add-AppvClientPackage
Add-AppvPublishingServer
Add-AppxPackage
Add-AppxProvisionedPackage
Add-AppxVolume
Add-AzureAccount
Add-AzureApplicationGatewaySslCertificate
Add-AzureCertificate
Add-AzureDataDisk
Add-AzureDisk
Add-AzureDns
Add-AzureEndpoint
Add-AzureEnvironment</pre>
<div class="lh"></div><div class="lht"></div><div class="lvt"></div>
<div class="b" style="left:494.400px">Run</div><div class="b" style="left:516.700px">Insert</div><div class="b" style="left:539px">Copy</div>
<div class="t" style="left:35.600px;top:297.300px;font-size:5.200px">Completed</div>
<div class="t" style="left:443px;top:296.700px">Ln 3 Col 11</div><div class="t" style="left:544.600px;top:297px;font-size:4.800px">100%</div>
<svg class="o" viewBox="0 0 600 337"><use href="#tb"/><use href="#pn"/><use href="#undo"/><use href="#run"/><path d="M103.500 85.500q1 1.500 2.500 0v-2" stroke="#d02020" stroke-width=".6" fill="none"/><path d="M88.500 83v6.500M87.500 83h2M87.500 89.500h2" stroke="#333" stroke-width=".5"/></svg>
</div>

<!-- CELL 8 -->
<div class="c" style="left:600px;top:674px">
<div class="d"></div>
<svg class="o" viewBox="0 0 600 337"><use href="#bin"/></svg>
<div class="t rb">Recycle Bin</div><div class="li">Linked</div><div class="in">in</div>
<div class="w"></div><div class="mb"></div><div class="tb"></div><div class="ts"></div><div class="ts2"></div><div class="dv"></div><div class="hs"></div><div class="hth"></div><div class="vs"></div><div class="vth" style="height:65px"></div>
<div class="con"><pre style="top:.700px">PS C:\Windows\system32&gt; Get-Command |
Where-Object {$_.CommandType -eq "Cmdlet"}

CommandType
-----------
Cmdlet
Cmdlet
Cmdlet
Cmdlet
Cmdlet
Cmdlet
Cmdlet
Cmdlet
Cmdlet
Cmdlet</pre><pre style="top:15.500px;left:73px">

Name
----
Add-AppvClientConnectionGroup
Add-AppvClientPackage
Add-AppvPublishingServer
Add-AppxPackage
Add-AppxProvisionedPackage
Add-AppxVolume
Add-AzureAccount
Add-AzureApplicationGatewaySslCertificate
Add-AzureCertificate
Add-AzureDataDisk</pre><pre style="top:15.500px;left:284.200px">

Version
-------
1.0.0.0
1.0.0.0
1.0.0.0
2.0.0.0
3.0
2.0.0.0
5.1.2
5.1.2
5.1.2
5.1.2</pre><pre style="top:15.500px;left:329.700px">

Source
------
AppvClient
AppvClient
AppvClient
Appx
Dism
Appx
Azure
Azure
Azure
Azure</pre></div>
<div class="vc"></div><div class="vct"></div><div class="hc"></div><div class="hct"></div><div class="st"></div><div class="ctab"></div><div class="tab tab2"></div>
<div class="t" style="left:44px;top:18.700px">Administrator: Windows PowerShell ISE</div>
<div class="t" style="left:34.400px;top:30.500px">File</div><div class="t" style="left:48.600px;top:30.500px">Edit</div><div class="t" style="left:63.500px;top:30.500px">View</div><div class="t" style="left:80.700px;top:30.500px">Tools</div><div class="t" style="left:99.100px;top:30.500px">Debug</div><div class="t" style="left:120.900px;top:30.500px">Add-ons</div><div class="t" style="left:147px;top:30.500px">Help</div>
<div class="t" style="left:38.700px;top:54px;font-size:5.100px">MakeHelp.ps1*</div><div class="t x" style="left:77.100px;top:54px">×</div>
<pre class="num">1
2
3
4
5</pre>
<pre class="code"><span class="k">Get-Command</span> <span class="p">|</span>
<span class="k">Where-Object</span> {<span class="v">$_</span>.CommandType <span class="g">-eq</span> <span class="s">"Cmdlet"</span>} <span class="p">|</span>
<span class="k">Get-Help</span> <span class="p">|</span>
<span class="k">Out-File</span> <span class="m">C:\Reference.txt</span>
<span class="k">Write-Host</span> <span class="s">"Cmdlet help was written to a text file on the root of the C drive."</span></pre>
<div style="left:393px;top:93px;width:.8px;height:6.500px;background:#222"></div>
<div class="t" style="left:435.500px;top:54.500px;font-size:4.800px;color:#5d6b70">Commands</div>
<div class="t" style="left:437.500px;top:71.700px;font-size:6.300px">Modules:</div><div class="t" style="left:437.500px;top:89.300px;font-size:6.300px">Name:</div>
<div class="dd"></div><div class="t" style="left:472.200px;top:70.700px;font-size:6.300px">All</div><div class="rf">Refresh</div><div class="nm"></div><div class="lb"></div>
<pre class="ll">A:
Add-AppvClientConnectionGroup
Add-AppvClientPackage
Add-AppvPublishingServer
Add-AppxPackage
Add-AppxProvisionedPackage
Add-AppxVolume
Add-AzureAccount
Add-AzureApplicationGatewaySslCertificate
Add-AzureCertificate
Add-AzureDataDisk
Add-AzureDisk
Add-AzureDns
Add-AzureEndpoint
Add-AzureEnvironment</pre>
<div class="lh"></div><div class="lht"></div><div class="lvt"></div>
<div class="b" style="left:494.400px">Run</div><div class="b" style="left:516.700px">Insert</div><div class="b" style="left:539px">Copy</div>
<div class="t" style="left:443px;top:296.700px">Ln 5 Col 80</div><div class="t" style="left:544.600px;top:297px;font-size:4.800px">100%</div>
<svg class="o" viewBox="0 0 600 337"><use href="#tb"/><use href="#pn"/><use href="#undo"/><use href="#run"/><path d="M144.800 91v6.500M143.800 91h2M143.800 97.500h2" stroke="#333" stroke-width=".5"/></svg>
</div>

<!-- CELL 9 -->
<div class="c" style="left:1200px;top:674px">
<div class="d"></div>
<svg class="o" viewBox="0 0 600 337"><use href="#bin"/></svg>
<div class="t rb">Recycle Bin</div><div class="li">Linked</div><div class="in">in</div>
<div class="w"></div><div class="mb"></div><div class="tb"></div><div class="ts"></div><div class="ts2"></div><div class="dv"></div><div class="hs"></div><div class="hth"></div><div class="vs"></div><div class="vth" style="height:65px"></div>
<div class="con"><pre style="top:-.900px">Cmdlet
Cmdlet
Cmdlet
Cmdlet
Cmdlet
Cmdlet
Cmdlet
Cmdlet



PS C:\Windows\system32&gt; C:\Users\Administrator\Documents\MakeHelp.ps1
Cmdlet help was written to a text file on the root of the C drive.

PS C:\Windows\system32&gt;</pre><pre style="top:-.900px;left:73px">Write-Error
Write-EventLog
Write-Host
Write-Information
Write-Output
Write-Progress
Write-Verbose
Write-Warning</pre><pre style="top:-.900px;left:284.200px">3.1.0.0
3.1.0.0
3.1.0.0
3.1.0.0
3.1.0.0
3.1.0.0
3.1.0.0
3.1.0.0</pre><pre style="top:-.900px;left:329.700px">Microsof...
Microsof...
Microsof...
Microsof...
Microsof...
Microsof...
Microsof...
Microsof...</pre></div>
<div class="vc"></div><div class="vct"></div><div class="hc"></div><div class="hct"></div><div class="st"></div><div class="ctab"></div><div class="tab"></div>
<div class="t" style="left:44px;top:18.700px">Administrator: Windows PowerShell ISE</div>
<div class="t" style="left:34.400px;top:30.500px">File</div><div class="t" style="left:48.600px;top:30.500px">Edit</div><div class="t" style="left:63.500px;top:30.500px">View</div><div class="t" style="left:80.700px;top:30.500px">Tools</div><div class="t" style="left:99.100px;top:30.500px">Debug</div><div class="t" style="left:120.900px;top:30.500px">Add-ons</div><div class="t" style="left:147px;top:30.500px">Help</div>
<div class="t" style="left:38.700px;top:54px;font-size:5.100px">MakeHelp.ps1</div><div class="t x" style="left:74.800px;top:54px">×</div>
<pre class="num">1
2
3
4
5</pre>
<pre class="code"><span class="k">Get-Command</span> <span class="p">|</span>
<span class="k">Where-Object</span> {<span class="v">$_</span>.CommandType <span class="g">-eq</span> <span class="s">"Cmdlet"</span>} <span class="p">|</span>
<span class="k">Get-Help</span> <span class="p">|</span>
<span class="k">Out-File</span> <span class="m">C:\Reference.txt</span>
<span class="k">Write-Host</span> <span class="s">"Cmdlet help was written to a text file on the root of the C drive."</span></pre>
<div class="t" style="left:435.500px;top:54.500px;font-size:4.800px;color:#5d6b70">Commands</div>
<div class="t" style="left:437.500px;top:71.700px;font-size:6.300px">Modules:</div><div class="t" style="left:437.500px;top:89.300px;font-size:6.300px">Name:</div>
<div class="dd"></div><div class="t" style="left:472.200px;top:70.700px;font-size:6.300px">All</div><div class="rf">Refresh</div><div class="nm"></div><div class="lb"></div>
<pre class="ll">A:
Add-AppvClientConnectionGroup
Add-AppvClientPackage
Add-AppvPublishingServer
Add-AppxPackage
Add-AppxProvisionedPackage
Add-AppxVolume
Add-AzureAccount
Add-AzureApplicationGatewaySslCertificate
Add-AzureCertificate
Add-AzureDataDisk
Add-AzureDisk
Add-AzureDns
Add-AzureEndpoint
Add-AzureEnvironment</pre>
<div class="lh"></div><div class="lht"></div><div class="lvt"></div>
<div class="b" style="left:494.400px">Run</div><div class="b" style="left:516.700px">Insert</div><div class="b" style="left:539px">Copy</div>
<div class="t" style="left:35.600px;top:297.300px;font-size:5.200px">Completed</div>
<div class="t" style="left:443px;top:296.700px">Ln 5 Col 80</div><div class="t" style="left:544.600px;top:297px;font-size:4.800px">100%</div>
<svg class="o" viewBox="0 0 600 337"><use href="#tb"/><use href="#pn"/><use href="#undo"/><use href="#run"/><path d="M129.300 264v7M128.300 264h2M128.300 271h2" stroke="#ddd" stroke-width=".5"/></svg>
</div>

</div>
</body></html>
